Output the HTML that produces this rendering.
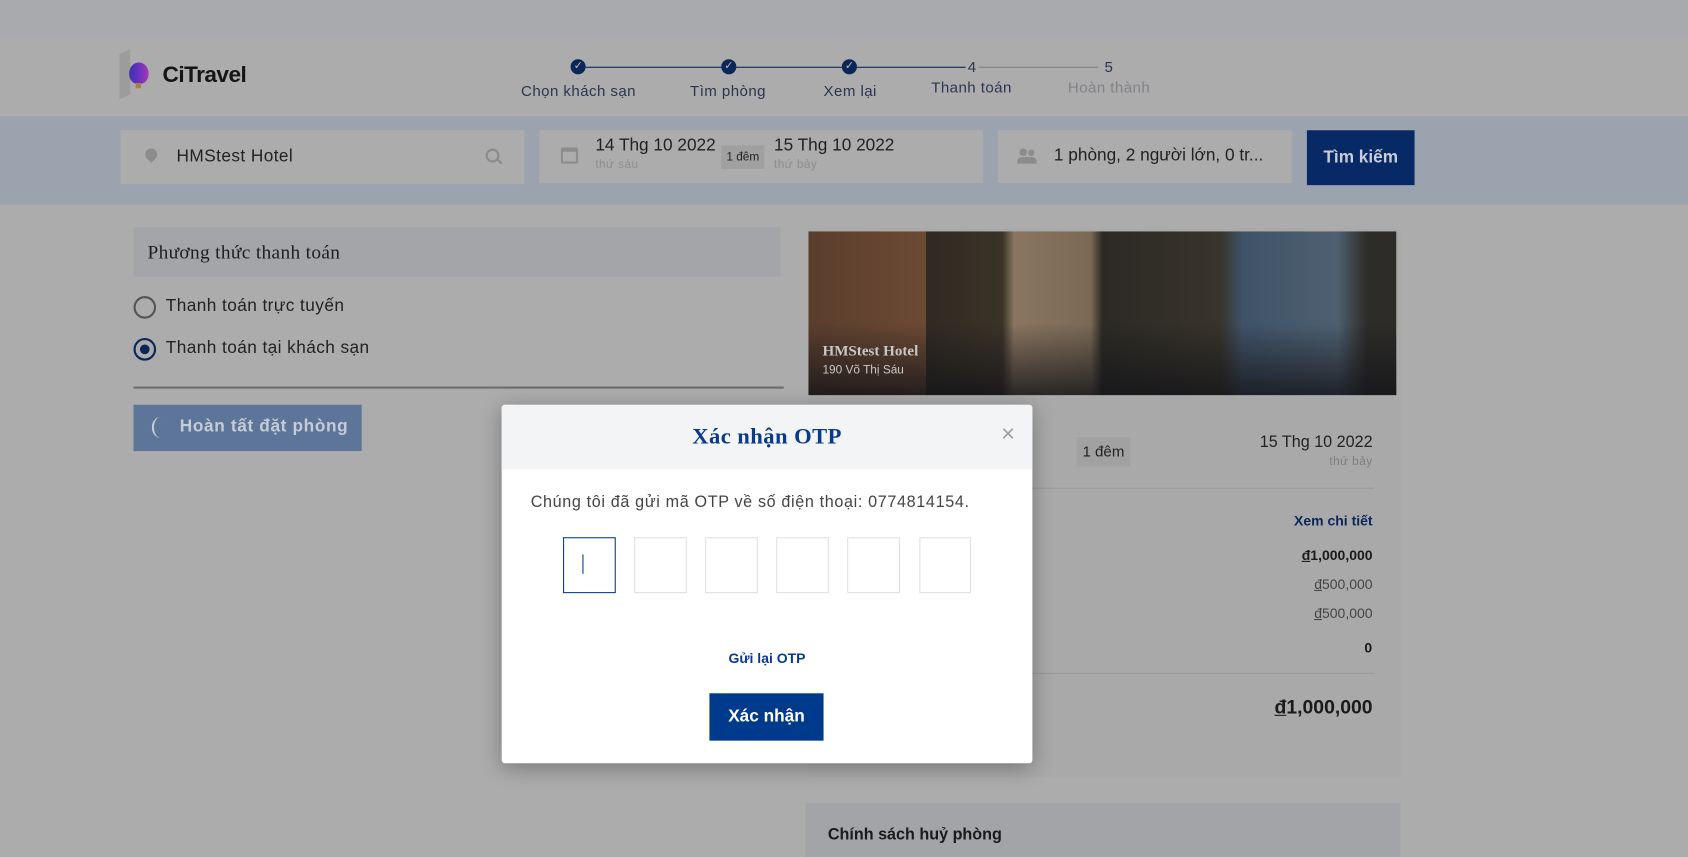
<!DOCTYPE html>
<html><head><meta charset="utf-8"><style>
html,body{margin:0;padding:0;width:1688px;height:850px;overflow:hidden;background:#acacac;font-family:"Liberation Sans",sans-serif;}
#w{position:absolute;left:0;top:0;width:1568px;height:790px;transform:scale(1.07653);transform-origin:0 0;background:#acacac;}
.a{position:absolute;}
.t{position:absolute;white-space:nowrap;letter-spacing:0.4px;}
</style></head><body><div id="w">
<div class="a" style="left:0;top:0;width:1568px;height:33px;background:#a8aaad"></div>
<div class="a" style="left:0;top:33px;width:1568px;height:75px;background:#acacac"></div>
<div class="a" style="left:111px;top:48px;width:10px;height:42px;background:#9c9c9c;transform:skewY(-25deg)"></div>
<div class="a" style="left:120px;top:58px;width:18px;height:20px;border-radius:50% 50% 45% 45%;background:linear-gradient(90deg,#3a33b0,#6b2fc0,#a13bb6)"></div>
<div class="a" style="left:126px;top:77px;width:5px;height:5px;background:#a5823e"></div>
<div class="t" style="left:151px;top:58px;font-size:21px;font-weight:bold;color:#151515;letter-spacing:-0.5px">CiTravel</div>
<div class="a" style="left:537px;top:62px;width:365px;height:1px;background:#0b2659"></div>
<div class="a" style="left:908px;top:62px;width:112px;height:1px;background:#7c7f86"></div>
<div class="a" style="left:530px;top:55px;width:14px;height:14px;border-radius:50%;background:#0b2659;color:#bbb;font-size:10px;text-align:center;line-height:14px">✓</div>
<div class="a" style="left:670px;top:55px;width:14px;height:14px;border-radius:50%;background:#0b2659;color:#bbb;font-size:10px;text-align:center;line-height:14px">✓</div>
<div class="a" style="left:782px;top:55px;width:14px;height:14px;border-radius:50%;background:#0b2659;color:#bbb;font-size:10px;text-align:center;line-height:14px">✓</div>
<div class="t" style="left:897px;top:54px;font-size:14px;color:#2a3550;background:#acacac;padding:0 2px">4</div>
<div class="t" style="left:1024px;top:54px;font-size:14px;color:#2a3550;background:#acacac;padding:0 2px">5</div>
<div class="t" style="left:484px;top:76px;font-size:14px;color:#2a3550">Chọn khách sạn</div>
<div class="t" style="left:641px;top:76px;font-size:14px;color:#2a3550">Tìm phòng</div>
<div class="t" style="left:765px;top:76px;font-size:14px;color:#2a3550">Xem lại</div>
<div class="t" style="left:865px;top:73px;font-size:14px;color:#2a3550">Thanh toán</div>
<div class="t" style="left:992px;top:73px;font-size:14px;color:#808288">Hoàn thành</div>
<div class="a" style="left:0;top:108px;width:1568px;height:82px;background:#9aa3ae"></div>
<div class="a" style="left:112px;top:121px;width:375px;height:50px;background:#acacac"></div>
<div class="a" style="left:135px;top:138px;width:11px;height:11px;border-radius:50% 50% 50% 0;transform:rotate(-45deg);background:#8c8c8c"></div>
<div class="t" style="left:164px;top:137px;font-size:16px;color:#222">HMStest Hotel</div>
<div class="a" style="left:451px;top:138px;width:9px;height:9px;border:2px solid #8c8c8c;border-radius:50%"></div>
<div class="a" style="left:461px;top:149px;width:6px;height:2px;background:#8c8c8c;transform:rotate(45deg)"></div>
<div class="a" style="left:501px;top:121px;width:412px;height:49px;background:#acacac"></div>
<div class="a" style="left:521px;top:137px;width:16px;height:15px;border:2px solid #8c8c8c;border-top-width:4px;border-radius:2px;box-sizing:border-box"></div>
<div class="t" style="left:553px;top:127px;font-size:16px;color:#222;letter-spacing:0">14 Thg 10 2022</div>
<div class="t" style="left:553px;top:147px;font-size:11px;color:#8e8e8e">thứ sáu</div>
<div class="a" style="left:670px;top:135px;width:40px;height:22px;background:#a0a0a0;font-size:11px;color:#222;text-align:center;line-height:22px">1 đêm</div>
<div class="t" style="left:719px;top:127px;font-size:16px;color:#222;letter-spacing:0">15 Thg 10 2022</div>
<div class="t" style="left:719px;top:147px;font-size:11px;color:#8e8e8e">thứ bảy</div>
<div class="a" style="left:927px;top:121px;width:273px;height:49px;background:#acacac"></div>
<div class="a" style="left:947px;top:138px;width:7px;height:7px;border-radius:50%;background:#8c8c8c"></div>
<div class="a" style="left:955px;top:139px;width:6px;height:6px;border-radius:50%;background:#8c8c8c"></div>
<div class="a" style="left:945px;top:146px;width:18px;height:6px;border-radius:4px 4px 0 0;background:#8c8c8c"></div>
<div class="t" style="left:979px;top:136px;font-size:16px;color:#222;letter-spacing:0">1 phòng, 2 người lớn, 0 tr...</div>
<div class="a" style="left:1214px;top:121px;width:100px;height:51px;background:#072a66;color:#c7ccd6;font-size:16px;font-weight:bold;text-align:center;line-height:51px">Tìm kiếm</div>
<div class="a" style="left:124px;top:211px;width:601px;height:46px;background:#a3a5a9"></div>
<div class="t" style="left:137px;top:224px;font-size:18px;color:#1e1e1e;font-family:'Liberation Serif',serif;letter-spacing:0.3px">Phương thức thanh toán</div>
<div class="a" style="left:124px;top:275px;width:21px;height:21px;border:2px solid #555;border-radius:50%;box-sizing:border-box"></div>
<div class="t" style="left:154px;top:276px;font-size:16px;color:#222">Thanh toán trực tuyến</div>
<div class="a" style="left:124px;top:314px;width:21px;height:21px;border:2px solid #0b2659;border-radius:50%;box-sizing:border-box"></div>
<div class="a" style="left:130px;top:320px;width:9px;height:9px;border-radius:50%;background:#0b2659"></div>
<div class="t" style="left:154px;top:315px;font-size:16px;color:#222">Thanh toán tại khách sạn</div>
<div class="a" style="left:124px;top:359px;width:604px;height:2px;background:#6e6e6e"></div>
<div class="a" style="left:124px;top:376px;width:212px;height:43px;background:#5d7598"></div>
<div class="a" style="left:141px;top:387px;width:16px;height:20px;border-left:2px solid #c5ccd7;border-radius:50%"></div>
<div class="t" style="left:167px;top:388px;font-size:16px;font-weight:bold;color:#c5ccd7;letter-spacing:0.6px">Hoàn tất đặt phòng</div>
<div class="a" style="left:751px;top:212px;width:550px;height:510px;background:#a9a9a9"></div>
<div class="a" style="left:751px;top:215px;width:546px;height:152px;background:linear-gradient(90deg,#5a3e2c 0,#6c4a34 20%,#2f2a22 20%,#3a3327 33%,#8a7560 35%,#7a6a55 48%,#2c2a24 50%,#38342b 70%,#3f5368 74%,#4e6070 90%,#2d2c28 95%)"></div>
<div class="a" style="left:751px;top:300px;width:546px;height:67px;background:linear-gradient(180deg,rgba(0,0,0,0),rgba(20,20,25,0.8))"></div>
<div class="t" style="left:764px;top:319px;font-size:14px;font-weight:bold;color:#c8c8c8;font-family:'Liberation Serif',serif;letter-spacing:0">HMStest Hotel</div>
<div class="t" style="left:764px;top:338px;font-size:11px;color:#c8c8c8;letter-spacing:0">190 Võ Thị Sáu</div>
<div class="a" style="left:1000px;top:406px;width:50px;height:27px;background:#a1a1a1;font-size:14px;color:#222;text-align:center;line-height:27px">1 đêm</div>
<div class="t" style="right:293px;top:402px;font-size:15px;color:#222;letter-spacing:0">15 Thg 10 2022</div>
<div class="t" style="right:293px;top:423px;font-size:11px;color:#7e7e7e">thứ bảy</div>
<div class="a" style="left:958px;top:453px;width:318px;height:1px;background:#9a9a9a"></div>
<div class="t" style="right:293px;top:476px;font-size:13px;font-weight:bold;color:#0b2659;letter-spacing:0">Xem chi tiết</div>
<div class="t" style="right:293px;top:508px;font-size:13px;font-weight:bold;color:#1a1a1a;letter-spacing:0"><u>đ</u>1,000,000</div>
<div class="t" style="right:293px;top:535px;font-size:13px;color:#444;letter-spacing:0"><u>đ</u>500,000</div>
<div class="t" style="right:293px;top:562px;font-size:13px;color:#444;letter-spacing:0"><u>đ</u>500,000</div>
<div class="t" style="right:293px;top:594px;font-size:13px;font-weight:bold;color:#1a1a1a">0</div>
<div class="a" style="left:958px;top:625px;width:318px;height:1px;background:#9a9a9a"></div>
<div class="t" style="right:293px;top:647px;font-size:18px;font-weight:bold;color:#1a1a1a;letter-spacing:0"><u>đ</u>1,000,000</div>
<div class="a" style="left:748px;top:746px;width:553px;height:50px;background:#a3a4a8"></div>
<div class="t" style="left:769px;top:767px;font-size:15px;font-weight:bold;color:#1a1a1a;letter-spacing:0">Chính sách huỷ phòng</div>
<div class="a" style="left:466px;top:376px;width:493px;height:333px;background:#fff;border-radius:3px;box-shadow:0 4px 20px rgba(0,0,0,0.3);overflow:hidden">
 <div class="a" style="left:0;top:0;width:493px;height:60px;background:#f3f4f6"></div>
 <div class="t" style="left:0;width:493px;top:17px;text-align:center;font-size:21px;font-weight:bold;color:#0a3a8a;font-family:'Liberation Serif',serif">Xác nhận OTP</div>
 <div class="t" style="left:464px;top:14px;font-size:22px;color:#9aa0a6">×</div>
 <div class="t" style="left:27px;top:82px;font-size:15px;color:#444;letter-spacing:0.6px">Chúng tôi đã gửi mã OTP về số điện thoại: 0774814154.</div>
 <div class="a" style="left:57px;top:123px;width:49px;height:52px;border:1px solid #0a3a8a;box-sizing:border-box"></div>
 <div class="a" style="left:75px;top:139px;width:1px;height:18px;background:#0a3a8a"></div>
 <div class="a" style="left:123px;top:123px;width:49px;height:52px;border:1px solid #dde2e6;box-sizing:border-box"></div>
 <div class="a" style="left:189px;top:123px;width:49px;height:52px;border:1px solid #dde2e6;box-sizing:border-box"></div>
 <div class="a" style="left:255px;top:123px;width:49px;height:52px;border:1px solid #dde2e6;box-sizing:border-box"></div>
 <div class="a" style="left:321px;top:123px;width:49px;height:52px;border:1px solid #dde2e6;box-sizing:border-box"></div>
 <div class="a" style="left:388px;top:123px;width:48px;height:52px;border:1px solid #dde2e6;box-sizing:border-box"></div>
 <div class="t" style="left:0;width:493px;top:228px;text-align:center;font-size:13px;font-weight:bold;color:#0a3a8a;letter-spacing:0">Gửi lại OTP</div>
 <div class="a" style="left:193px;top:268px;width:106px;height:44px;background:#003a8c;color:#fff;font-size:16px;font-weight:bold;text-align:center;line-height:44px">Xác nhận</div>
</div>
</div></body></html>
